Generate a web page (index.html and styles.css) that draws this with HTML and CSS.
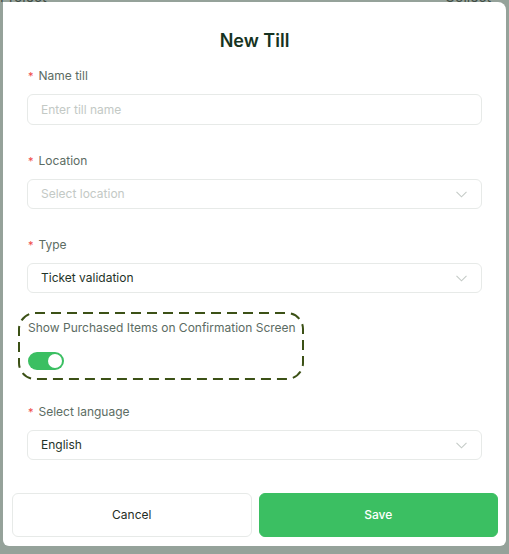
FILE: index.html
```html
<!DOCTYPE html>
<html lang="en">
<head>
<meta charset="utf-8">
<title>New Till</title>
<link rel="stylesheet" href="styles.css">
</head>
<body>
<div class="backdrop-header">
  <span>Project</span>
  <span>Collect</span>
</div>
<div class="modal">
  <h1 class="title">New Till</h1>

  <div class="field">
    <label class="label"><span class="req">*</span>Name till</label>
    <div class="control input"><span class="placeholder">Enter till name</span></div>
  </div>

  <div class="field">
    <label class="label"><span class="req">*</span>Location</label>
    <div class="control select"><span class="placeholder">Select location</span>
      <svg class="chev" width="11" height="7" viewBox="0 0 11 7"><path d="M0.5 0.8 L5.5 5.8 L10.5 0.8" fill="none" stroke="#c5cbc7" stroke-width="1.1"/></svg>
    </div>
  </div>

  <div class="field">
    <label class="label"><span class="req">*</span>Type</label>
    <div class="control select"><span class="value">Ticket validation</span>
      <svg class="chev" width="11" height="7" viewBox="0 0 11 7"><path d="M0.5 0.8 L5.5 5.8 L10.5 0.8" fill="none" stroke="#c5cbc7" stroke-width="1.1"/></svg>
    </div>
  </div>

  <div class="toggle-box">
    <svg class="dash" width="286" height="68" viewBox="0 0 286 68"><rect x="1" y="1" width="284" height="66" rx="16" ry="16" fill="none" stroke="#3c5116" stroke-width="2" stroke-dasharray="10 6"/></svg>
    <div class="label plain">Show Purchased Items on Confirmation Screen</div>
    <div class="switch"><span class="knob"></span></div>
  </div>

  <div class="field">
    <label class="label"><span class="req">*</span>Select language</label>
    <div class="control select"><span class="value">English</span>
      <svg class="chev" width="11" height="7" viewBox="0 0 11 7"><path d="M0.5 0.8 L5.5 5.8 L10.5 0.8" fill="none" stroke="#c5cbc7" stroke-width="1.1"/></svg>
    </div>
  </div>

  <div class="footer">
    <button class="btn cancel">Cancel</button>
    <button class="btn save">Save</button>
  </div>
</div>
</body>
</html>
```
FILE: styles.css
```css
html, body {
  margin: 0;
  padding: 0;
}
body {
  background: #95a29a;
  font-family: Inter, "Noto Sans", sans-serif;
  width: 509px;
  height: 554px;
  overflow: hidden;
  position: relative;
}
.backdrop-header {
  position: absolute;
  top: -11px;
  left: 0;
  right: 0;
  display: flex;
  justify-content: space-between;
  padding: 0 18px 0 0;
  font-size: 14px;
  line-height: 15px;
  color: #3f4c44;
}
.modal {
  position: relative;
  margin: 2px 3px 0 3px;
  width: 503px;
  height: 544px;
  box-sizing: border-box;
  background: #ffffff;
  border-radius: 0 8px 6px 6px;
  padding: 27px 24px 0 24px;
  display: flex;
  flex-direction: column;
}
.title {
  margin: 0;
  text-align: center;
  font-size: 18px;
  line-height: 24px;
  font-weight: 600;
  color: #163322;
}
.field {
  display: flex;
  flex-direction: column;
}
.title + .field { margin-top: 14px; }
.field + .field { margin-top: 27px; }
.label {
  font-size: 12px;
  line-height: 18px;
  color: #5c6c63;
  display: flex;
  align-items: center;
}
.req {
  color: #ef4a4a;
  font-size: 11px;
  margin-right: 5px;
  margin-left: 1px;
}
.control {
  margin-top: 9px;
  height: 30px;
  box-sizing: border-box;
  border: 1px solid #e7eae8;
  border-radius: 6px;
  display: flex;
  align-items: center;
  padding: 0 12px 1px 13px;
  font-size: 12px;
}
.input { height: 31px; }
.select { justify-content: space-between; height: 30px; }
.placeholder { color: #c3c9c5; }
.value { color: #1f3328; }
.chev { margin-right: 2px; margin-top: 1px; }

.toggle-box {
  position: relative;
  margin: 19px 0 0 -9px;
  width: 286px;
  height: 68px;
  box-sizing: border-box;
  padding: 7px 0 0 10px;
}
.dash {
  position: absolute;
  left: 0;
  top: 0;
}
.plain { display: block; }
.switch {
  margin-top: 15px;
  width: 36px;
  height: 18px;
  border-radius: 9px;
  background: #3bbf62;
  position: relative;
}
.knob {
  position: absolute;
  right: 2px;
  top: 2px;
  width: 14px;
  height: 14px;
  border-radius: 50%;
  background: #ffffff;
}
.toggle-box + .field { margin-top: 23px; }

.footer {
  margin: auto -16px 9px -15px;
  display: flex;
  gap: 7px;
}
.btn {
  flex: 1;
  height: 44px;
  border-radius: 6px;
  font-family: Inter, "Noto Sans", sans-serif;
  font-size: 12px;
  line-height: 16px;
  padding: 0;
  cursor: pointer;
}
.cancel {
  background: #ffffff;
  border: 1px solid #e7eae8;
  color: #1f2d25;
  font-weight: 400;
}
.save {
  background: #3bbf62;
  border: 1px solid #3bbf62;
  color: #ffffff;
  font-weight: 500;
}
```
